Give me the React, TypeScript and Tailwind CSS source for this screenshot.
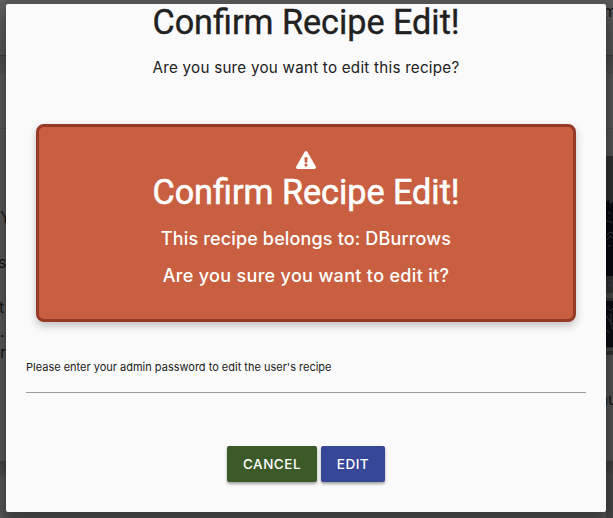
import type { ReactNode } from "react";

function Line({ children, className }: { children: ReactNode; className: string }) {
  return <p className={`whitespace-nowrap text-center ${className}`}>{children}</p>;
}

function WarningIcon() {
  return (
    <svg viewBox="0 0 576 512" className="h-[18px] w-[20px]" fill="currentColor" aria-hidden="true">
      <path d="M569.5 440C588 472 564.8 512 527.900 512H48.100C11.100 512-12 472 6.500 440L246.400 24c18.500-32 64.700-32 83.200 0l239.900 416zM288 354c-25.400 0-46 20.600-46 46s20.600 46 46 46 46-20.600 46-46-20.600-46-46-46zm-43.700-165.300 7.400 136c.4 6.400 5.600 11.300 12 11.300h48.600c6.400 0 11.600-5 12-11.300l7.400-136c.4-6.900-5.100-12.700-12-12.700h-63.400c-6.900 0-12.400 5.800-12 12.700z" />
    </svg>
  );
}

function RecipePhoto() {
  return (
    <svg viewBox="0 0 7 199" className="h-[199px] w-[7px]" fill="none" aria-hidden="true">
      <path fill="#303132" d="M0 0h7v199H0z" />
      <path fill="#07090f" d="M0 46l3-2 1 4 3-2v74H0z" />
      <path fill="#0a0c12" d="M0 145h7v46H0z" />
      <path stroke="#343639" d="M2 56l3 2M0 65h3l3 2M1 79l3-3 3 1M1 84l3-4 2 2M2 91l2-2M0 128l3-4 4 4M0 134l3-5 4 3M1 151l4 4 2-3M1 160l2 5 4 3M5 157v11l2 6M1 174l2 3" />
      <path fill="#444546" d="M0 137h7v5H0zM0 192h7v3H0z" />
    </svg>
  );
}

function Background() {
  return (
    <div className="flex h-full justify-between bg-[#5b5b5b] font-['Inter',sans-serif] text-[16px] leading-[20px] text-[#161616]">
      <div className="w-[6px]">
        <div className="h-[56px] border-b border-[#444] bg-gradient-to-b from-[#636363] to-[#5a5a5a]" />
        <div className="h-[18px] bg-gradient-to-b from-[#505050] to-[#575757]" />
        <div className="h-[55px] border-b border-[#505050] bg-[#5d5d5d]" />
        <div className="h-[332px] bg-[#5b5b5b] pt-[78px]">
          <p>Y</p>
          <p className="-ml-[2px] mt-[25px]">s</p>
          <p className="-ml-px mt-[25px]">t</p>
          <p className="mt-[4px]">.</p>
          <p className="mt-px">r</p>
        </div>
        <div className="h-[17px] bg-gradient-to-b from-[#444] to-[#555]" />
        <div className="h-[40px] bg-[#5a5a5a]" />
      </div>
      <div className="w-[7px]">
        <div className="h-[56px] border-b border-[#3d3d3d] bg-gradient-to-b from-[#5c5c5c] to-[#535353] pt-px">
          <p className="-ml-[3px]">m</p>
        </div>
        <div className="h-[18px] bg-gradient-to-b from-[#484848] to-[#515151]" />
        <div className="h-[55px] border-b border-[#4a4a4a] bg-[#575757]" />
        <div className="h-[27px] bg-[#555]" />
        <RecipePhoto />
        <div className="h-[106px] bg-[#535353] pt-[34px]">
          <p className="-ml-[7px]">au</p>
        </div>
        <div className="h-[17px] bg-gradient-to-b from-[#3d3d3d] to-[#4a4a4a]" />
        <div className="h-[40px] bg-[#484848]" />
      </div>
    </div>
  );
}

export default function App() {
  return (
    <main className="relative h-[518px] w-[613px] overflow-hidden bg-[#5b5b5b]">
      <Background />
      <section className="absolute left-[6px] top-[4px] flex h-[508px] w-[600px] flex-col items-center rounded-[2px] bg-[#fafafa] text-[#212121] shadow-[0_0_0_6px_rgba(35,35,35,0.06),0_8px_14px_2px_rgba(0,0,0,0.35)]">
        <h4 className="-mt-px h-[38px] scale-x-[0.954] whitespace-nowrap font-['Roboto',sans-serif] text-[35.800px] leading-[38px] [-webkit-text-stroke:0.4px_currentColor]">Confirm Recipe Edit!</h4>
        <Line className="mt-[15px] font-['Inter',sans-serif] text-[15.200px] leading-[24px] tracking-[0.24px]">Are you sure you want to edit this recipe?</Line>
        <div className="mt-[44px] flex h-[198px] w-[540px] shrink-0 flex-col items-center rounded-[8px] border-[3px] border-[#963926] bg-[#c85f40] pt-[24px] text-white shadow-[0_4px_8px_rgba(0,0,0,0.22)]">
          <WarningIcon />
          <h4 className="mt-[4px] h-[38px] scale-x-[0.954] whitespace-nowrap font-['Roboto',sans-serif] text-[35.800px] leading-[38px] [-webkit-text-stroke:0.6px_currentColor]">Confirm Recipe Edit!</h4>
          <Line className="mt-[16px] font-['Inter',sans-serif] text-[18px] font-medium leading-[24px] tracking-[0.15px]">This recipe belongs to: DBurrows</Line>
          <Line className="mt-[13px] font-['Inter',sans-serif] text-[18px] font-medium leading-[24px] tracking-[0.32px]">Are you sure you want to edit it?</Line>
        </div>
        <label className="mt-[36px] flex h-[35px] w-[560px] shrink-0 flex-col border-b border-[#9a9a9a] font-['Inter',sans-serif] text-[11px] leading-[18px]">
          <span>Please enter your admin password to edit the user's recipe</span>
        </label>
        <div className="mt-[53px] flex gap-[4px] font-['Inter',sans-serif] text-[13.500px] font-medium leading-[36px] tracking-[0.5px] text-white">
          <button className="h-[36px] w-[90px] rounded-[2px] bg-[#3b5a28] shadow-[0_2px_3px_rgba(0,0,0,0.35)]">CANCEL</button>
          <button className="h-[36px] w-[64px] rounded-[2px] bg-[#364798] shadow-[0_2px_3px_rgba(0,0,0,0.35)]">EDIT</button>
        </div>
      </section>
    </main>
  );
}
